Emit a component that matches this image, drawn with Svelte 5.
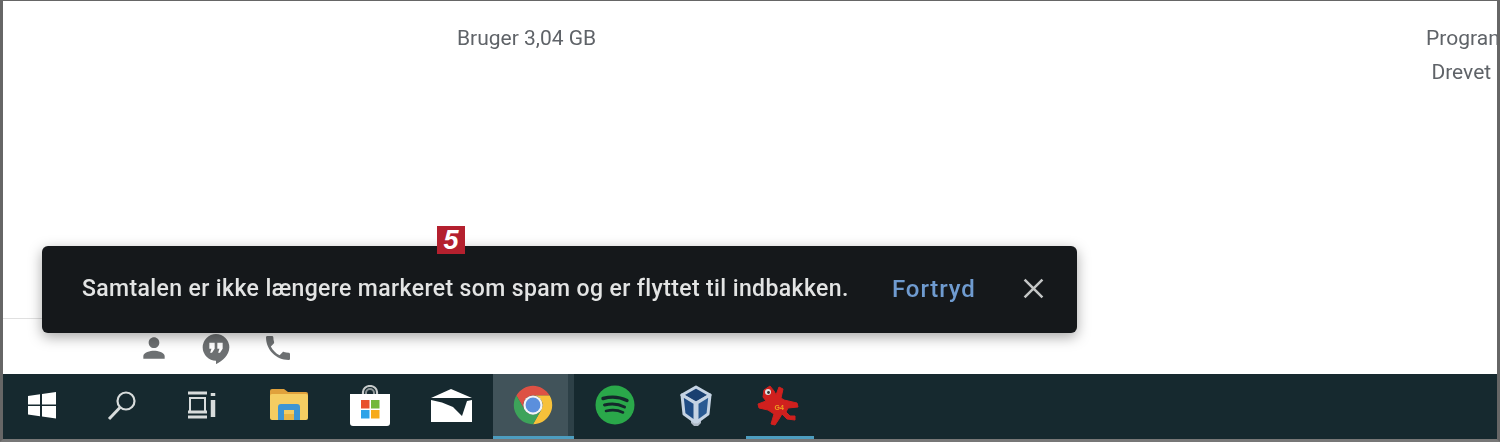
<script lang="ts">
  const message = "Samtalen er ikke længere markeret som spam og er flyttet til indbakken.";
</script>

<div class="screen">
  <main class="page">
    <div class="info">
      <span class="usage">Bruger 3,04 GB</span>
      <div class="links">
        <span>Programpolitikker</span>
        <span>Drevet af Google</span>
      </div>
    </div>

    <div class="rule"></div>
    <div class="contact">
      <svg viewBox="0 0 24 24" aria-label="person">
        <path d="M12 12c2.21 0 4-1.79 4-4s-1.79-4-4-4-4 1.79-4 4 1.79 4 4 4zm0 2c-2.67 0-8 1.34-8 4v2h16v-2c0-2.66-5.33-4-8-4z" />
      </svg>
      <svg viewBox="0 0 24 24" aria-label="hangouts">
        <path d="M12 1.5a10 10 0 0 0-10 10 10 10 0 0 0 10 10v2.6c4.6-2.2 10-6.6 10-12.6a10 10 0 0 0-10-10z" />
        <path class="quote" d="M7 8h4v4.5l-2 3H7.6l1-3H7zM13 8h4v4.5l-2 3h-1.400l1-3H13z" />
      </svg>
      <svg viewBox="0 0 24 24" aria-label="phone">
        <path d="M6.62 10.79c1.44 2.83 3.76 5.14 6.59 6.59l2.2-2.200c.27-.27.67-.36 1.020-.24 1.120.37 2.330.57 3.570.57.55 0 1 .45 1 1V20c0 .55-.45 1-1 1-9.390 0-17-7.610-17-17 0-.55.45-1 1-1h3.500c.55 0 1 .45 1 1 0 1.250.2 2.450.57 3.570.11.35.03.74-.25 1.020l-2.200 2.200z" />
      </svg>
    </div>

    <div class="toast">
      <span class="message">{message}</span>
      <button class="undo">Fortryd</button>
      <button class="close" aria-label="luk">
        <svg viewBox="0 0 20 20"><path d="M1.500 1.500l17 17M18.500 1.500l-17 17" /></svg>
      </button>
    </div>
    <div class="badge">5</div>
  </main>

  <footer class="taskbar">
    <div class="group system">
      <div class="slot">
        <svg width="30" height="30" viewBox="0 0 30 30" aria-label="windows">
          <path fill="#fff" d="M1 6l12-1.700v10.200H1zM15 4l14-2v12.500H15zM1 16h12v10.200L1 24.500zM15 16h14v12.500L15 26.500z" />
        </svg>
      </div>
      <div class="slot">
        <svg width="32" height="32" viewBox="0 0 32 32" aria-label="search" fill="none" stroke="#d8dcdc" stroke-width="2.200">
          <circle cx="20" cy="12" r="8.500" />
          <path d="M14 18.500L3 30" stroke-width="3" />
        </svg>
      </div>
      <div class="slot">
        <svg width="30" height="28" viewBox="0 0 30 28" aria-label="task view" fill="none" stroke="#d8dcdc" stroke-width="2">
          <path d="M1 2h19M1 26h19M1 21h19" stroke-width="3" />
          <rect x="3" y="7" width="15" height="14" />
          <path d="M26 2v3M26 9v17" stroke-width="4.500" />
        </svg>
      </div>
    </div>

    <div class="group">
      <div class="slot">
        <svg width="38" height="32" viewBox="0 0 38 32" aria-label="explorer">
          <path fill="#e0a13c" d="M0 2a2 2 0 0 1 2-2h12l4 3h18a2 2 0 0 1 2 2v3H0z" />
          <rect y="5" width="38" height="26" rx="2" fill="#f5cd62" />
          <path fill="#3e95d3" d="M8 31V18a3 3 0 0 1 3-3h16a3 3 0 0 1 3 3v13h-6v-10H14v10z" />
          <rect x="14" y="25" width="10" height="6" fill="#e9b544" />
        </svg>
      </div>
      <div class="slot">
        <svg width="40" height="41" viewBox="0 0 40 41" aria-label="store">
          <path fill="none" stroke="#c8cccc" stroke-width="2.200" d="M13 12V7a7 6 0 0 1 14 0v5" />
          <path fill="none" stroke="#8c9496" stroke-width="2" d="M16 12V8a4 4 0 0 1 8 0v4" />
          <path fill="#fff" d="M0 9h40v29a3 3 0 0 1-3 3H3a3 3 0 0 1-3-3z" />
          <rect x="11" y="15" width="8.500" height="8.500" fill="#e8502c" />
          <rect x="21" y="15" width="8.500" height="8.500" fill="#72b83a" />
          <rect x="11" y="25" width="8.500" height="8.500" fill="#2ea3e8" />
          <rect x="21" y="25" width="8.500" height="8.500" fill="#f7ab1c" />
        </svg>
      </div>
      <div class="slot">
        <svg width="41" height="33" viewBox="0 0 41 33" aria-label="mail">
          <path fill="#fff" d="M20 0L41 9H0z" />
          <rect y="10" width="41" height="23" fill="#fff" />
          <path fill="#16292f" d="M0 9.500H41V11L36 12 31 27 22 18 11 13.500 0 11z" />
        </svg>
      </div>
      <div class="slot active">
        <svg width="42" height="42" viewBox="0 0 48 48" aria-label="chrome">
          <path fill="#dd5144" d="M5 13A22 22 0 0 1 43 13H24A11 11 0 0 0 14.500 29.500Z" />
          <path fill="#f7c13a" d="M43 13A22 22 0 0 1 24 46L33.500 29.500A11 11 0 0 0 24 13Z" />
          <path fill="#3da35a" d="M24 46A22 22 0 0 1 5 13L14.500 29.500A11 11 0 0 0 33.500 29.500Z" />
          <circle cx="24" cy="24" r="11" fill="#f4f4f4" />
          <circle cx="24" cy="24" r="8.500" fill="#5b8fdc" />
        </svg>
      </div>
      <div class="slot">
        <svg width="40" height="40" viewBox="0 0 40 40" aria-label="spotify">
          <circle cx="20" cy="20" r="19.500" fill="#2aa84a" />
          <g fill="none" stroke="#14282b" stroke-linecap="round">
            <path stroke-width="3.400" d="M8 13.500c8-2.200 17-1.500 24 2" />
            <path stroke-width="3" d="M9.500 20c7-1.800 14-1.200 20 2" />
            <path stroke-width="2.600" d="M11 26c5.500-1.300 12-1 17 1.500" />
          </g>
        </svg>
      </div>
      <div class="slot">
        <svg width="34" height="41" viewBox="0 0 34 41" aria-label="virtualbox">
          <path fill="#aeb8c4" d="M12 33h10v5l-3 3h-4l-3-3z" />
          <g stroke="#c5d3e3" stroke-width="3" stroke-linejoin="round">
            <path fill="#1a3f70" d="M17 2L31 10 17 18 3 10z" />
            <path fill="#1f4c85" d="M3 10L16 18V37L5 29z" />
            <path fill="#2a5a92" d="M31 10L18 18V37L29 29z" />
          </g>
        </svg>
      </div>
      <div class="slot bug">
        <svg width="48" height="44" viewBox="0 0 48 44" aria-label="mascot">
          <path fill="#d0201e" stroke="#d0201e" stroke-width="1" stroke-linejoin="round" d="M10 7L16 3 20 8 22 12 25 4 29 6 27 15 30 17 43 20 44 24 34 25 32 29 36 33 41 33 41 37 33 36 28 31 25 36 21 42 17 41 20 31 14 27 5 25 4 21 12 18 9 14Z" />
          <circle cx="14" cy="9" r="3" fill="#dfe3e3" />
          <circle cx="14.500" cy="9.500" r="1.400" fill="#33302f" />
          <text x="20.500" y="26.500" class="bug-label">G4</text>
        </svg>
      </div>
    </div>
  </footer>
</div>

<style>
  :global(body) {
    margin: 0;
    background: #fff;
  }

  .screen {
    display: flex;
    flex-direction: column;
    box-sizing: border-box;
    width: 1500px;
    height: 442px;
    overflow: hidden;
    background: #fff;
    border-top: 1px solid #666;
    border-left: 3px solid #666;
    border-right: 3px solid #666;
    border-bottom: 3px solid #777;
    font-family: Roboto, "Liberation Sans", sans-serif;
  }

  .page {
    position: relative;
    display: flex;
    flex: 1;
    flex-direction: column;
    min-height: 0;
  }

  /* footer of the mail page */
  .info {
    display: grid;
    grid-template-columns: 967px 170px;
    padding: 20px 0 0 454px;
    font-size: 21px;
    line-height: 34px;
    color: #5f6368;
    filter: blur(0.4px);
  }

  .links {
    display: flex;
    flex-direction: column;
    align-items: center;
    white-space: nowrap;
  }

  .rule {
    width: 100px;
    height: 1px;
    margin-top: auto;
    background: #e0e0e0;
  }

  .contact {
    display: flex;
    gap: 30px;
    height: 55px;
    padding: 13px 0 0 135px;
    box-sizing: border-box;
    filter: blur(0.4px);
  }

  .contact svg {
    width: 32px;
    height: 32px;
    fill: #6d7072;
  }

  .contact .quote {
    fill: #fff;
  }

  .toast {
    position: absolute;
    top: 245px;
    left: 39px;
    display: flex;
    align-items: center;
    box-sizing: border-box;
    width: 1035px;
    height: 87px;
    padding: 0 0 2px 40px;
    border-radius: 6px;
    background: #15181b;
    box-shadow: 0 4px 14px rgba(0, 0, 0, 0.35);
  }

  .message {
    width: 770px;
    font-size: 23px;
    font-weight: 500;
    letter-spacing: 0.38px;
    white-space: nowrap;
    color: #e3e4e4;
    filter: blur(0.4px);
  }

  button {
    padding: 0;
    border: 0;
    background: none;
    font: inherit;
  }

  .undo {
    margin-left: 40px;
    font-size: 24px;
    font-weight: 500;
    letter-spacing: 0.9px;
    color: #6f9bd0;
    filter: blur(0.4px);
  }

  .close {
    display: flex;
    margin-left: 47px;
  }

  .close svg {
    width: 21px;
    height: 21px;
    fill: none;
    stroke: #c4c6c6;
    stroke-width: 2.400;
  }

  .badge {
    position: absolute;
    top: 225px;
    left: 434px;
    width: 28px;
    height: 28px;
    background: #b4202e;
    color: #fff;
    font-family: "Liberation Sans", sans-serif;
    font-size: 27px;
    font-style: italic;
    font-weight: 700;
    line-height: 28px;
    text-align: center;
  }

  .taskbar {
    display: flex;
    flex-shrink: 0;
    height: 65px;
    background: #16292f;
  }

  .group {
    display: flex;
    margin-left: 6px;
  }

  .group.system {
    margin-left: -1px;
  }

  .slot {
    position: relative;
    display: flex;
    align-items: center;
    justify-content: center;
    box-sizing: border-box;
    width: 81.500px;
    padding-bottom: 3px;
    filter: blur(0.4px);
  }

  .system .slot {
    width: 80px;
  }

  .active {
    background: linear-gradient(90deg, #41535a 92%, #2d4047 92%);
  }

  .active::after,
  .bug::after {
    position: absolute;
    right: 0;
    bottom: 0;
    left: 0;
    height: 3px;
    background: #4d9dbf;
    content: "";
  }

  .bug::after {
    right: 5px;
    left: 9px;
  }

  .bug-label {
    font-family: "Liberation Sans", sans-serif;
    font-size: 7px;
    font-weight: 700;
    fill: #eea21f;
  }
</style>
